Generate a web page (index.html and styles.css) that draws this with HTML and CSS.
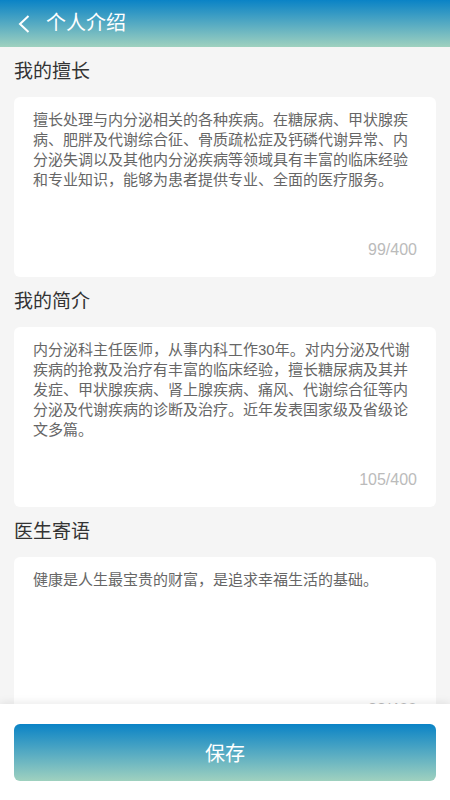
FILE: index.html
```html
<!DOCTYPE html>
<html>
<head>
<meta charset="utf-8">
<title>个人介绍</title>
<link rel="stylesheet" href="styles.css">
</head>
<body>
  <div class="header">
    <svg class="back" width="14" height="18" viewBox="0 0 14 18">
      <polyline points="11.5,1 3,9 11.5,17" fill="none" stroke="#fff" stroke-width="2"/>
    </svg>
    <span class="title">个人介绍</span>
  </div>

  <div class="content">
    <div class="label">我的擅长</div>
    <div class="card">
      <div class="field-text">擅长处理与内分泌相关的各种疾病。在糖尿病、甲状腺疾病、肥胖及代谢综合征、骨质疏松症及钙磷代谢异常、内分泌失调以及其他内分泌疾病等领域具有丰富的临床经验和专业知识，能够为患者提供专业、全面的医疗服务。</div>
      <div class="count">99/400</div>
    </div>

    <div class="label">我的简介</div>
    <div class="card">
      <div class="field-text">内分泌科主任医师，从事内科工作30年。对内分泌及代谢疾病的抢救及治疗有丰富的临床经验，擅长糖尿病及其并发症、甲状腺疾病、肾上腺疾病、痛风、代谢综合征等内分泌及代谢疾病的诊断及治疗。近年发表国家级及省级论文多篇。</div>
      <div class="count">105/400</div>
    </div>

    <div class="label">医生寄语</div>
    <div class="card">
      <div class="field-text">健康是人生最宝贵的财富，是追求幸福生活的基础。</div>
      <div class="count">23/400</div>
    </div>
  </div>

  <div class="footer">
    <button class="save">保存</button>
  </div>
</body>
</html>
```

FILE: styles.css
```css
body {
  margin: 0;
  font-family: "Liberation Sans", "Noto Sans CJK SC", sans-serif;
  background-color: #f5f5f5;
}
.header {
  height: 47px;
  display: flex;
  align-items: center;
  padding: 0 0 0 17px;
  background: linear-gradient(to bottom, #0a83c6, #9fd1bf);
  color: #fff;
}
.back {
  display: block;
  margin-right: 15px;
}
.title {
  font-size: 20px;
  line-height: 47px;
  margin-top: -1px;
}
.content {
  padding: 0 14px;
}
.label {
  height: 50px;
  line-height: 50px;
  font-size: 19px;
  color: #333;
}
.card {
  background-color: #fff;
  border-radius: 6px;
  padding: 13px 19px 17px;
}
.field-text {
  height: 130px;
  font-size: 15px;
  line-height: 20px;
  color: #666;
}
.count {
  text-align: right;
  font-size: 16px;
  line-height: 20px;
  color: #bbb;
}
.footer {
  position: fixed;
  left: 0;
  right: 0;
  bottom: 0;
  background-color: #fff;
  padding: 20px 14px 19px;
  box-shadow: 0 -2px 8px rgba(0, 0, 0, 0.08);
}
.save {
  display: block;
  width: 100%;
  height: 57px;
  border: none;
  border-radius: 6px;
  background: linear-gradient(to bottom, #0a83c6, #9fd1bf);
  color: #fff;
  font-family: "Liberation Sans", "Noto Sans CJK SC", sans-serif;
  font-size: 20px;
  cursor: pointer;
}
```
